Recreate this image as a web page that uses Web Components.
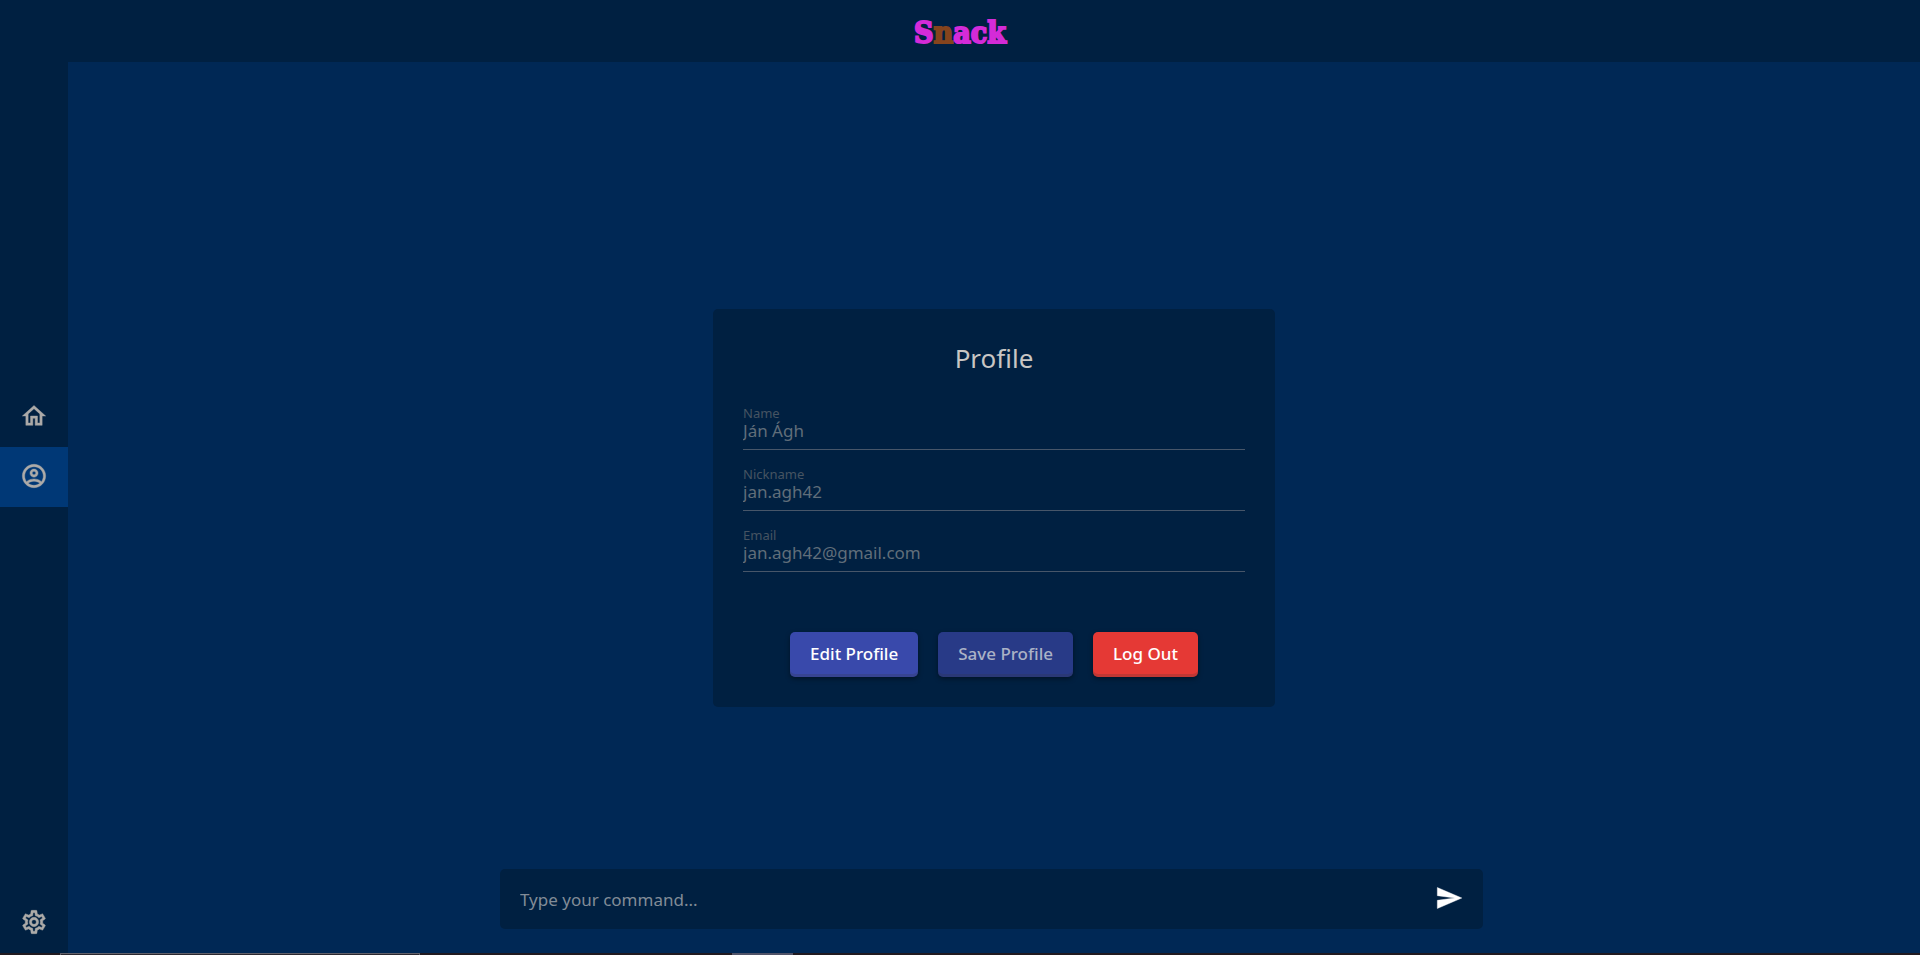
<!DOCTYPE html>
<html lang="en">
<head>
<meta charset="utf-8">
<title>Snack</title>
<style>
html, body { height: 100%; }
body {
  margin: 0;
  background: #002855;
  color: #c8c6c4;
  font-family: "Noto Sans", "Open Sans", sans-serif;
  font-size: 17px;
  --panel: #002041;
  --active: #003876;
}
</style>
</head>
<body>
<snack-app></snack-app>
<script>
const define = (name, markup, setup) => {
  const template = document.createElement('template');
  template.innerHTML = markup;
  customElements.define(name, class extends HTMLElement {
    connectedCallback() {
      if (this.shadowRoot) return;
      this.attachShadow({ mode: 'open' }).append(template.content.cloneNode(true));
      if (setup) setup(this, this.shadowRoot);
    }
  });
};

const icons = {
  home: 'M12 5.69L17 10.19V18H15V12H9V18H7V10.19L12 5.69M12 3L2 12H5V20H11V14H13V20H19V12H22L12 3Z',
  account: 'M12 2C6.48 2 2 6.48 2 12s4.48 10 10 10 10-4.48 10-10S17.52 2 12 2zM7.07 18.28c.43-.9 3.05-1.78 4.93-1.78s4.51.88 4.93 1.78C15.57 19.36 13.86 20 12 20s-3.57-.64-4.93-1.72zm11.29-1.45c-1.43-1.74-4.9-2.33-6.36-2.33s-4.93.59-6.36 2.33C4.62 15.49 4 13.82 4 12c0-4.41 3.59-8 8-8s8 3.59 8 8c0 1.82-.62 3.49-1.64 4.83zM12 6c-1.94 0-3.5 1.56-3.5 3.5S10.06 13 12 13s3.5-1.56 3.5-3.5S13.94 6 12 6zm0 5c-.83 0-1.5-.67-1.5-1.5S11.17 8 12 8s1.5.67 1.5 1.5S12.83 11 12 11z',
  settings: 'M12,8A4,4 0 0,1 16,12A4,4 0 0,1 12,16A4,4 0 0,1 8,12A4,4 0 0,1 12,8M12,10A2,2 0 0,0 10,12A2,2 0 0,0 12,14A2,2 0 0,0 14,12A2,2 0 0,0 12,10M10,22C9.75,22 9.54,21.82 9.5,21.58L9.13,18.93C8.5,18.68 7.96,18.34 7.44,17.94L4.95,18.95C4.73,19.03 4.46,18.95 4.34,18.73L2.34,15.27C2.21,15.05 2.27,14.78 2.46,14.63L4.57,12.97L4.5,12L4.57,11L2.46,9.37C2.27,9.22 2.21,8.95 2.34,8.73L4.34,5.27C4.46,5.05 4.73,4.96 4.95,5.05L7.44,6.05C7.96,5.66 8.5,5.32 9.13,5.07L9.5,2.42C9.54,2.18 9.75,2 10,2H14C14.25,2 14.46,2.18 14.5,2.42L14.87,5.07C15.5,5.32 16.04,5.66 16.56,6.05L19.05,5.05C19.27,4.96 19.54,5.05 19.66,5.27L21.66,8.73C21.79,8.95 21.73,9.22 21.54,9.37L19.43,11L19.5,12L19.43,13L21.54,14.63C21.73,14.78 21.79,15.05 21.66,15.27L19.66,18.73C19.54,18.95 19.27,19.04 19.05,18.95L16.56,17.95C16.04,18.34 15.5,18.68 14.87,18.93L14.5,21.58C14.46,21.82 14.25,22 14,22H10M11.25,4L10.88,6.61C9.68,6.86 8.62,7.5 7.85,8.39L5.44,7.35L4.69,8.65L6.8,10.2C6.4,11.37 6.4,12.64 6.8,13.8L4.68,15.36L5.43,16.66L7.86,15.62C8.63,16.5 9.68,17.14 10.87,17.38L11.24,20H12.76L13.13,17.39C14.32,17.14 15.37,16.5 16.14,15.62L18.57,16.66L19.32,15.36L17.2,13.81C17.6,12.64 17.6,11.37 17.2,10.2L19.31,8.65L18.56,7.35L16.15,8.39C15.38,7.5 14.32,6.86 13.12,6.62L12.75,4H11.25Z',
  send: 'M2,21L23,12L2,3V10L17,12L2,14V21Z'
};

define('snack-icon', `
<style>
:host { display: block; width: 28px; height: 28px; padding-bottom: 2px; }
svg { display: block; width: 100%; height: 100%; fill: currentColor; stroke: currentColor; stroke-width: .35; }
</style>
<svg viewBox="0 0 24 24" aria-hidden="true"><path></path></svg>`,
(host, root) => root.querySelector('path').setAttribute('d', icons[host.getAttribute('name')]));

define('snack-logo', `
<style>
:host { display: block; padding-top: 3px; }
a {
  display: block;
  color: #d42bd8;
  text-decoration: none;
  font: bold 30px/50px "DejaVu Serif Condensed", "DejaVu Serif", serif;
  -webkit-text-stroke: 2px currentColor;
}
.choc { color: #85441d; }
</style>
<a href="#home">S<span class="choc">n</span>ack</a>`);

define('snack-nav-item', `
<style>
:host { display: block; }
a { display: grid; place-items: center; height: 60px; color: #acaaa8; }
:host([active]) a { background: var(--active); }
</style>
<a><slot></slot></a>`,
(host, root) => {
  const link = root.querySelector('a');
  link.href = host.getAttribute('to');
  link.setAttribute('aria-label', host.getAttribute('label'));
});

define('snack-sidebar', `
<style>
:host { display: flex; flex-direction: column; background: var(--panel); }
nav { flex: 1; display: flex; flex-direction: column; justify-content: center; }
</style>
<nav>
  <snack-nav-item to="#home" label="Home"><snack-icon name="home"></snack-icon></snack-nav-item>
  <snack-nav-item to="#profile" label="Profile" active><snack-icon name="account"></snack-icon></snack-nav-item>
</nav>
<snack-nav-item to="#settings" label="Settings"><snack-icon name="settings"></snack-icon></snack-nav-item>`);

define('snack-field', `
<style>
:host { display: block; }
label { display: block; font-size: 13px; line-height: 16px; color: #465462; }
input {
  display: block;
  box-sizing: border-box;
  width: 100%;
  height: 29px;
  margin: 0;
  padding: 0 0 8px;
  border: 0;
  border-bottom: 1px solid #475669;
  border-radius: 0;
  outline: 0;
  background: none;
  color: #606e7a;
  font: inherit;
  line-height: 20px;
}
</style>
<label for="value"></label>
<input id="value" disabled>`,
(host, root) => {
  root.querySelector('label').textContent = host.getAttribute('label');
  const input = root.querySelector('input');
  input.type = host.getAttribute('type') || 'text';
  input.value = host.getAttribute('value');
});

define('snack-button', `
<style>
:host { display: block; }
button {
  display: block;
  height: 45px;
  margin: 0;
  padding: 0 20px 2px;
  border: 0;
  border-radius: 5px;
  background: #3949ab;
  box-shadow: inset 0 -3px 0 rgba(50, 50, 50, .2), 0 2px 5px rgba(0, 0, 0, .4);
  color: #fff;
  font: inherit;
  font-weight: 500;
  white-space: nowrap;
}
button:disabled { background: #283a87; color: #abb2c6; }
:host([kind="danger"]) button { background: #e53935; }
</style>
<button type="button"><slot></slot></button>`,
(host, root) => { root.querySelector('button').disabled = host.hasAttribute('disabled'); });

define('snack-profile', `
<style>
:host {
  display: block;
  box-sizing: border-box;
  width: 562px;
  max-width: 100%;
  padding: 30px;
  border-radius: 5px;
  background: var(--panel);
}
h1 { margin: 0 0 28px; font-size: 26px; font-weight: 400; line-height: 38px; text-align: center; }
.fields { display: grid; gap: 16px; }
.actions { display: flex; flex-wrap: wrap; justify-content: center; gap: 20px; margin-top: 60px; }
</style>
<h1>Profile</h1>
<div class="fields">
  <snack-field label="Name" value="Ján Ágh"></snack-field>
  <snack-field label="Nickname" value="jan.agh42"></snack-field>
  <snack-field label="Email" type="email" value="jan.agh42@gmail.com"></snack-field>
</div>
<div class="actions">
  <snack-button>Edit Profile</snack-button>
  <snack-button disabled>Save Profile</snack-button>
  <snack-button kind="danger">Log Out</snack-button>
</div>`);

define('snack-command', `
<style>
:host { display: block; width: 983px; max-width: 100%; }
form {
  display: flex;
  align-items: center;
  height: 60px;
  padding: 0 20px;
  border-radius: 5px;
  background: var(--panel);
}
input {
  flex: 1;
  min-width: 0;
  height: 40px;
  padding: 0;
  border: 0;
  outline: 0;
  background: none;
  color: #c8c6c4;
  font: inherit;
}
input::placeholder { color: #828c97; opacity: 1; }
button { padding: 0; border: 0; background: none; color: #fff; }
</style>
<form>
  <input type="text" placeholder="Type your command..." aria-label="Command">
  <button type="button" aria-label="Send"><snack-icon name="send"></snack-icon></button>
</form>`);

define('snack-taskbar', `
<style>
:host { display: flex; height: 2px; background: #211a20; }
.search { width: 360px; margin-left: 60px; box-sizing: border-box; border: 1px solid #62616a; border-bottom: 0; background: #2b2830; }
.task { width: 61px; margin-left: 312px; background: #505368; }
</style>
<div class="search"></div>
<div class="task"></div>`);

define('snack-app', `
<style>
:host {
  display: grid;
  grid-template: 62px minmax(0, 1fr) 2px / 68px minmax(0, 1fr);
  min-height: 100vh;
}
snack-sidebar { grid-area: 1 / 1 / 3 / 2; }
header { grid-area: 1 / 1 / 2 / 3; display: grid; place-items: center; background: var(--panel); }
main { grid-area: 2 / 2 / 3 / 3; display: grid; place-items: center; }
snack-profile, .command { grid-area: 1 / 1; }
.command {
  box-sizing: border-box;
  width: 100%;
  align-self: end;
  display: flex;
  justify-content: center;
  padding: 0 5px 24px 0;
}
snack-taskbar { grid-area: 3 / 1 / 4 / 3; }
</style>
<snack-sidebar></snack-sidebar>
<header><snack-logo></snack-logo></header>
<main>
  <snack-profile></snack-profile>
  <div class="command"><snack-command></snack-command></div>
</main>
<snack-taskbar></snack-taskbar>`);
</script>
</body>
</html>
